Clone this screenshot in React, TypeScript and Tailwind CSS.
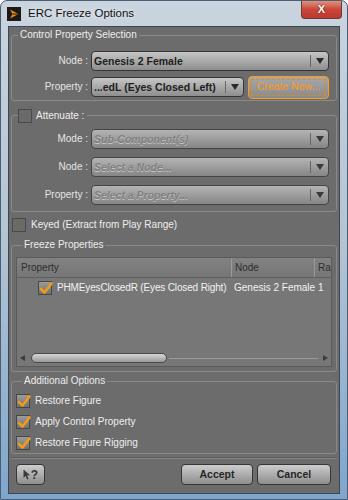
import React from 'react';

const Arrow: React.FC<{ dim?: boolean }> = ({ dim }) => (
  <svg width="8" height="6" viewBox="0 0 8 6">
    <path d="M0 0 L8 0 L4 6 Z" fill={dim ? '#3a3a3a' : '#2a2a2a'} />
  </svg>
);

const Dropdown: React.FC<{ text: string; disabled?: boolean; className?: string }> = ({
  text,
  disabled = false,
  className = ''
}) => (
  <div
    className={`flex h-[20px] items-center rounded-[4px] border ${
      disabled
        ? 'border-[#454545] bg-linear-to-b from-[#b4b4b4] to-[#868686]'
        : 'border-[#353535] bg-linear-to-b from-[#c6c6c6] to-[#8e8e8e]'
    } ${className}`}
  >
    <span
      className={`flex-1 truncate pl-[2px] text-[10.5px] leading-[14px] ${
        disabled ? 'font-bold italic text-[#7f7f7f] [text-shadow:0_1px_0_#c4c4c4]' : 'font-bold text-[#1e1e1e]'
      }`}
    >
      {text}
    </span>
    <div className="h-[12px] w-px bg-[#666]" />
    <div className="flex w-[17px] justify-center">
      <Arrow dim={disabled} />
    </div>
  </div>
);

const Checkbox: React.FC<{ checked?: boolean }> = ({ checked = false }) => (
  <div
    className={`relative h-[14px] w-[14px] shrink-0 border ${
      checked ? 'border-[#474747] bg-linear-to-b from-[#9c9c9c] to-[#707070]' : 'border-[#4a4a4a] bg-[#6a6a6a]'
    }`}
  >
    {checked && (
      <svg className="absolute left-0 top-0 overflow-visible" width="14" height="14" viewBox="0 0 14 14">
        <path d="M2 7 L5.5 10.5 L12.5 1.5" fill="none" stroke="#f39a17" strokeWidth="2.6" strokeLinecap="round" strokeLinejoin="round" />
      </svg>
    )}
  </div>
);

const Label: React.FC<{ children: React.ReactNode }> = ({ children }) => (
  <span className="w-[76px] shrink-0 text-right text-[10px] leading-[14px] text-[#e4e4e4]">{children}</span>
);

const Row: React.FC<{ label: string; children: React.ReactNode }> = ({ label, children }) => (
  <div className="flex h-[20px] items-center gap-[3px]">
    <Label>{label}</Label>
    <div className="flex flex-1 items-center gap-[4px] pr-[7px]">{children}</div>
  </div>
);

const Button: React.FC<{ children: React.ReactNode; className?: string }> = ({ children, className = '' }) => (
  <div
    className={`flex h-[21px] items-center justify-center rounded-[4px] border border-[#363636] bg-linear-to-b from-[#cdcdcd] to-[#8e8e8e] text-[10.5px] font-bold text-[#262626] ${className}`}
  >
    {children}
  </div>
);

export default function App() {
  return (
    <div className="relative h-[500px] w-[348px] overflow-hidden rounded-t-[7px] border border-[#4a5e74] bg-linear-to-b from-[#c9d4de] via-[#b3c3d2] to-[#7ea6cc] font-['Liberation_Sans',Arial,sans-serif]">
      {/* Title bar */}
      <div className="flex h-[25px] items-center pl-[6px]">
        <div className="mr-[7px] flex h-[14px] w-[14px] items-center justify-center bg-[#1a1a1a]">
          <svg width="12" height="12" viewBox="0 0 12 12">
            <path d="M2 1.5 L10.5 6 L2 10.5 L4.5 6 Z" fill="#f28a12" />
            <path d="M4.5 6 L10.5 6" stroke="#1a1a1a" strokeWidth="1.2" />
          </svg>
        </div>
        <span className="text-[11.5px] text-[#111] [text-shadow:0_0_6px_#ffffff]">ERC Freeze Options</span>
      </div>
      <div className="absolute right-[5px] top-0 flex h-[18px] w-[41px] items-center justify-center rounded-b-[4px] border border-t-0 border-[#6b3b3b] bg-linear-to-b from-[#e0907e] via-[#c8463a] to-[#c0392d]">
        <span className="text-[11px] font-bold leading-none text-white [text-shadow:0_0_2px_#4a1010]">X</span>
      </div>

      {/* Client area */}
      <div className="mx-[7px] flex h-[468px] flex-col border border-[#3b4757] bg-[#6c6c6c] px-[2px] text-[10px] text-[#e8e8e8]">
        {/* Control Property Selection */}
        <fieldset className="mt-[1px] rounded-[3px] border border-[#8a8a8a] pb-[3px] pt-[9px]">
          <legend className="ml-[6px] px-[2px] leading-[14px] text-[#eeeeee]">Control Property Selection</legend>
          <div className="flex flex-col gap-[6px]">
            <Row label="Node :">
              <Dropdown text="Genesis 2 Female" className="flex-1" />
            </Row>
            <Row label="Property :">
              <Dropdown text="...edL (Eyes Closed Left)" className="w-[153px]" />
              <div className="flex h-[23px] flex-1 items-center justify-center rounded-[4px] border-[1.5px] border-[#ff9c1a] bg-linear-to-b from-[#a8a8a8] to-[#8a8a8a] p-[2px]">
                <div className="flex h-full w-full items-center justify-center border border-dashed border-[#d98a2a] text-[10.5px] text-[#ff9a1c]">
                  Create New...
                </div>
              </div>
            </Row>
          </div>
        </fieldset>

        {/* Attenuate */}
        <fieldset className="mt-[7px] rounded-[3px] border border-[#8a8a8a] pb-[6px] pt-[6px]">
          <legend className="ml-[6px] flex items-center gap-[4px] pr-[3px] leading-[15px] text-[#eeeeee]">
            <Checkbox />
            <span>Attenuate :</span>
          </legend>
          <div className="flex flex-col gap-[8px]">
            <Row label="Mode :">
              <Dropdown text="Sub-Component(s)" disabled className="flex-1" />
            </Row>
            <Row label="Node :">
              <Dropdown text="Select a Node..." disabled className="flex-1" />
            </Row>
            <Row label="Property :">
              <Dropdown text="Select a Property..." disabled className="flex-1" />
            </Row>
          </div>
        </fieldset>

        {/* Keyed */}
        <div className="mt-[6px] flex h-[14px] items-center gap-[5px] pl-[1px]">
          <Checkbox />
          <span className="leading-[14px] text-[#eeeeee]">Keyed (Extract from Play Range)</span>
        </div>

        {/* Freeze Properties */}
        <fieldset className="mt-[6px] rounded-[3px] border border-[#8a8a8a] px-[4px] pb-[4px] pt-[5px]">
          <legend className="ml-[6px] px-[2px] leading-[14px] text-[#eeeeee]">Freeze Properties</legend>
          <div className="flex h-[110px] flex-col border border-[#5a5a5a] bg-[#777777]">
            <div className="flex h-[20px] border-b border-[#5e5e5e] bg-linear-to-b from-[#828282] to-[#767676] text-[#2e2e2e]">
              <div className="flex w-[215px] items-center border-r border-[#9a9a9a] pl-[4px]">Property</div>
              <div className="flex w-[83px] items-center border-r border-[#9a9a9a] pl-[3px]">Node</div>
              <div className="flex flex-1 items-center overflow-hidden pl-[3px]">Ra</div>
            </div>
            <div className="flex h-[19px] items-center whitespace-nowrap text-[#f2f2f2]">
              <div className="flex w-[215px] items-center gap-[5px] pl-[21px]">
                <Checkbox checked />
                <span className="tracking-[-0.15px]">PHMEyesClosedR (Eyes Closed Right)</span>
              </div>
              <div className="w-[83px] overflow-hidden pl-[2px]">Genesis 2 Female</div>
              <div className="flex-1 pl-[3px]">1</div>
            </div>
            <div className="flex-1" />
            <div className="mb-[3px] flex h-[10px] items-center px-[3px]">
              <svg width="5" height="6" viewBox="0 0 5 6">
                <path d="M5 0 L0 3 L5 6 Z" fill="#3c3c3c" />
              </svg>
              <div className="ml-[6px] h-[10px] w-[136px] rounded-full border border-[#4a4a4a] bg-linear-to-b from-[#d6d6d6] to-[#9a9a9a]" />
              <div className="mx-[2px] h-px flex-1 bg-[#9c9c9c]" />
              <svg className="ml-[3px]" width="5" height="6" viewBox="0 0 5 6">
                <path d="M0 0 L5 3 L0 6 Z" fill="#3c3c3c" />
              </svg>
            </div>
          </div>
        </fieldset>

        {/* Additional Options */}
        <fieldset className="mt-[2px] rounded-[3px] border border-[#8a8a8a] pb-[3px] pl-[4px] pt-[6px]">
          <legend className="ml-[6px] px-[2px] leading-[14px] text-[#eeeeee]">Additional Options</legend>
          <div className="flex flex-col gap-[7px]">
            {['Restore Figure', 'Apply Control Property', 'Restore Figure Rigging'].map((t) => (
              <div key={t} className="flex h-[14px] items-center gap-[5px]">
                <Checkbox checked />
                <span className="leading-[14px] text-[#eeeeee]">{t}</span>
              </div>
            ))}
          </div>
        </fieldset>

        <div className="mt-[3px] h-[2px] border-t border-[#5a5a5a] bg-[#858585]" />

        {/* Bottom buttons */}
        <div className="mt-[5px] flex items-center pl-[5px] pr-[6px]">
          <Button className="w-[29px]">
            <svg width="8" height="11" viewBox="0 0 8 11">
              <path d="M0.5 0.5 L0.5 9 L2.6 7 L4.2 10.5 L5.6 9.8 L4 6.4 L7 6.3 Z" fill="#3a3a3a" />
            </svg>
            <span className="text-[12px] leading-none text-[#333]">?</span>
          </Button>
          <div className="flex-1" />
          <Button className="w-[72px]">Accept</Button>
          <Button className="ml-[4px] w-[74px]">Cancel</Button>
        </div>
      </div>
    </div>
  );
}
